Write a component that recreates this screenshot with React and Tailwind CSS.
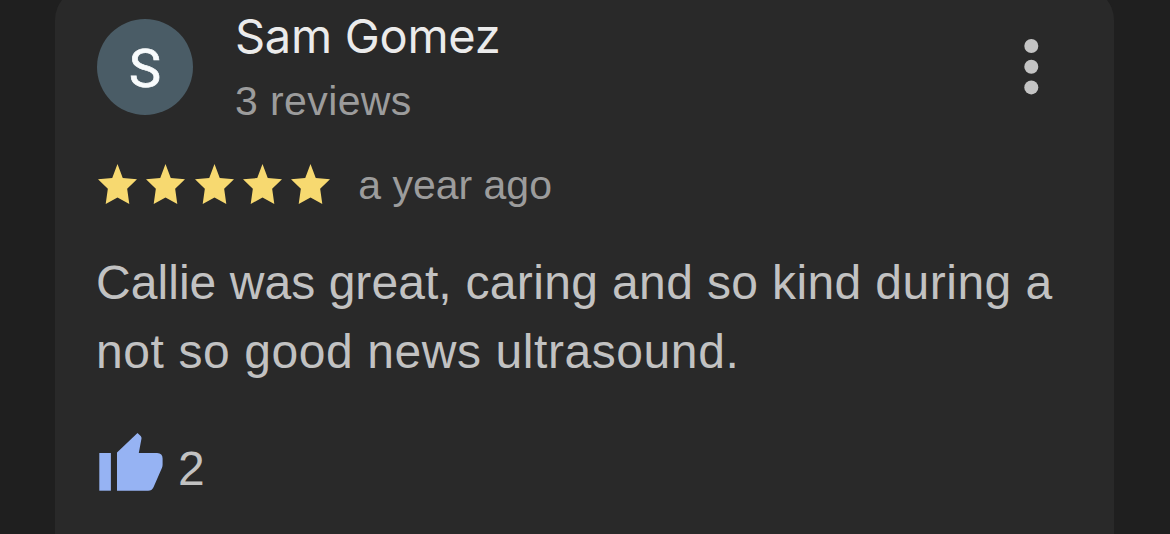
const STAR_COUNT = 5

export default function App() {
  return (
    <div className="flex h-[534px] w-[1170px] justify-start overflow-hidden bg-[#1f1f1f] font-['Liberation_Sans',Arial,sans-serif]">
      <ReviewCard name="Sam Gomez" reviews="3 reviews" date="a year ago" likes={2}>
        <span className="block tracking-[0.37px]">
          <span className="tracking-[0.05px]">Callie was great,</span> caring and so kind{" "}
          <span className="tracking-[0.5px]">during a</span>
        </span>
        <span className="block tracking-[0.58px]">not so good news ultrasound.</span>
      </ReviewCard>
    </div>
  )
}

function ReviewCard({ name, reviews, date, likes, children }) {
  return (
    <article className="-mt-3 ml-[55px] flex h-[560px] w-[1059px] shrink-0 flex-col rounded-t-[32px] bg-[#292929] pt-[31px] pl-[42px]">
      <header className="flex h-24 items-start">
        <div className="flex size-24 items-center justify-center rounded-full bg-[#4a5c66] font-[Roboto,sans-serif] text-[54px] leading-none text-[#f8fbfc]">
          <span className="pt-[3px] [-webkit-text-stroke:0.7px_#f8fbfc]">{name[0]}</span>
        </div>
        <div className="-mt-[11px] ml-[42px] flex flex-col whitespace-nowrap">
          <h2 className="font-[Inter,sans-serif] text-[47px] leading-[56px] tracking-[-0.3px] text-[#ebebeb]">{name}</h2>
          <p className="mt-[9px] text-[41px] leading-[56px] tracking-[0.4px] text-[#9c9c9c]">{reviews}</p>
        </div>
        <MoreIcon />
      </header>

      <div className="mt-[39px] flex h-[60px] items-center">
        <div className="flex gap-[9.3px] pl-px">
          {Array.from({ length: STAR_COUNT }, (_, i) => (
            <Star key={i} />
          ))}
        </div>
        <span className="ml-[28px] pt-[2px] text-[41px] leading-[60px] text-[#9c9c9c]">{date}</span>
      </div>

      <p className="mt-[34px] -ml-px text-[48px] leading-[69px] whitespace-nowrap text-[#c2c2c2]">{children}</p>

      <div className="mt-[46px] flex h-[60px] items-start">
        <ThumbUp />
        <span className="ml-[13px] pt-[7px] text-[48px] leading-[60px] text-[#c2c2c2]">{likes}</span>
      </div>
    </article>
  )
}

function MoreIcon() {
  return (
    <svg className="mt-[19px] mr-[75px] ml-auto shrink-0" width="16" height="58" viewBox="0 0 16 58" fill="#c4c4c4">
      <circle cx="8.3" cy="8" r="7" />
      <circle cx="8.3" cy="28.8" r="7" />
      <circle cx="8.3" cy="49.4" r="7" />
    </svg>
  )
}

function Star() {
  return (
    <svg width="39" height="40" viewBox="2 2 20 19" preserveAspectRatio="none" fill="#f7d970">
      <path d="M12 17.9 18.05 21l-1.1-7.2L22 9.24l-7.3-.55L12 2 9.3 8.69 2 9.24l5.05 4.56L5.95 21z" />
    </svg>
  )
}

function ThumbUp() {
  return (
    <svg width="68" height="60" viewBox="0 0 68 60" fill="#96b3f3">
      <path d="M2.3 21h11.6v37.7H2.3z" />
      <path d="M20 20.5 40.5 1l3.2 3q1 1.1.8 2.5L41.8 21h18.4q5.4.2 5.4 5.5v6.3q0 1.5-.6 3l-8.5 19.4q-1.6 3.5-5.4 3.5H20z" />
    </svg>
  )
}
